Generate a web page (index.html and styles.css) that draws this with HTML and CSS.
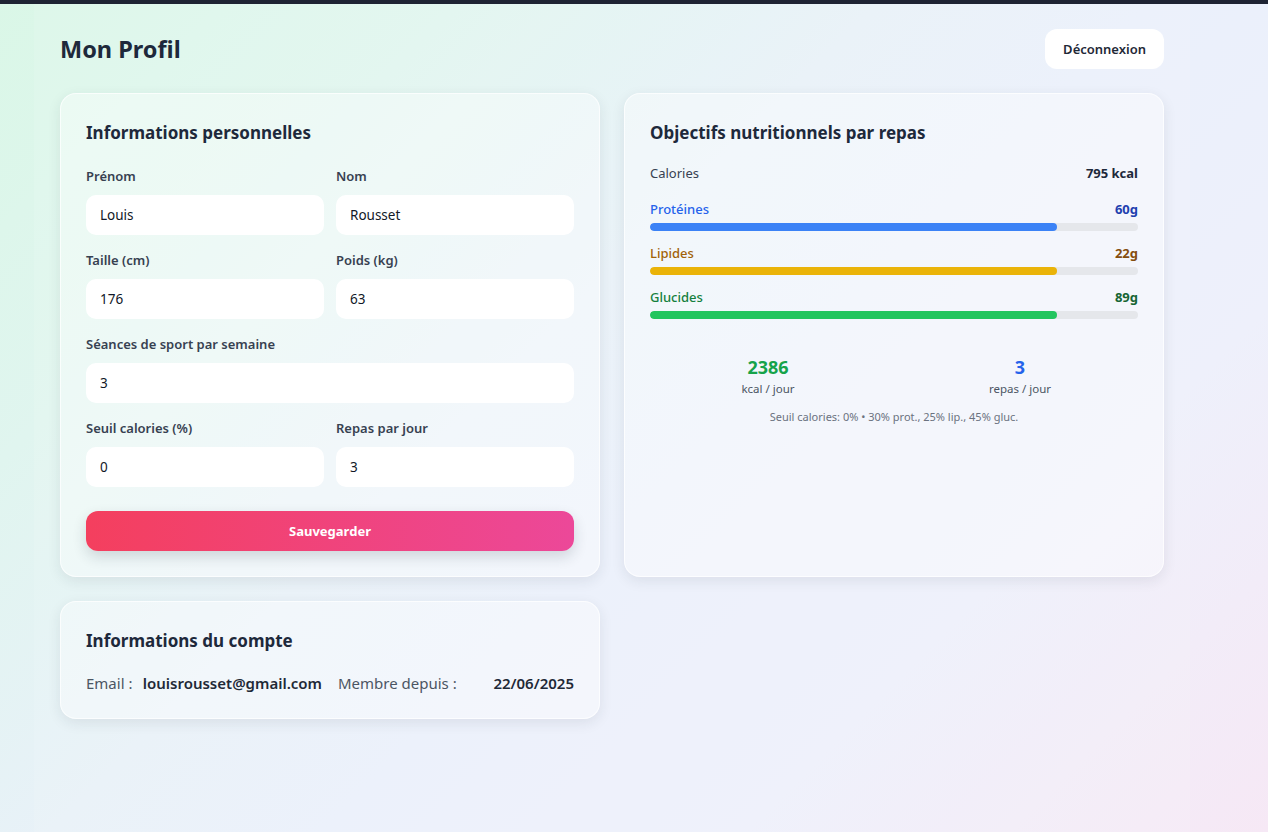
FILE: index.html
```html
<!DOCTYPE html>
<html lang="fr">
<head>
<meta charset="utf-8">
<title>Mon Profil</title>
<link rel="stylesheet" href="styles.css">
</head>
<body>
<div class="topbar"></div>
<div class="page">
  <header class="header">
    <h1 class="page-title">Mon Profil</h1>
    <button class="logout">Déconnexion</button>
  </header>
  <div class="grid">
    <section class="card">
      <h2 class="card-title">Informations personnelles</h2>
      <div class="form">
        <div class="row two">
          <div class="field"><label class="label">Prénom</label><div class="input">Louis</div></div>
          <div class="field"><label class="label">Nom</label><div class="input">Rousset</div></div>
        </div>
        <div class="row two">
          <div class="field"><label class="label">Taille (cm)</label><div class="input">176</div></div>
          <div class="field"><label class="label">Poids (kg)</label><div class="input">63</div></div>
        </div>
        <div class="row">
          <div class="field"><label class="label">Séances de sport par semaine</label><div class="input">3</div></div>
        </div>
        <div class="row two">
          <div class="field"><label class="label">Seuil calories (%)</label><div class="input">0</div></div>
          <div class="field"><label class="label">Repas par jour</label><div class="input">3</div></div>
        </div>
      </div>
      <button class="save">Sauvegarder</button>
    </section>
    <section class="card">
      <h2 class="card-title">Objectifs nutritionnels par repas</h2>
      <div class="nut-row cal">
        <span class="nut-label">Calories</span><span class="nut-val">795 kcal</span>
      </div>
      <div class="macro prot">
        <div class="nut-row"><span class="nut-label">Protéines</span><span class="nut-val">60g</span></div>
        <div class="track"><div class="fill" style="width:83.4%"></div></div>
      </div>
      <div class="macro lip">
        <div class="nut-row"><span class="nut-label">Lipides</span><span class="nut-val">22g</span></div>
        <div class="track"><div class="fill" style="width:83.4%"></div></div>
      </div>
      <div class="macro gluc">
        <div class="nut-row"><span class="nut-label">Glucides</span><span class="nut-val">89g</span></div>
        <div class="track"><div class="fill" style="width:83.4%"></div></div>
      </div>
      <div class="stats">
        <div class="stat"><div class="stat-num green">2386</div><div class="stat-lbl">kcal / jour</div></div>
        <div class="stat"><div class="stat-num blue">3</div><div class="stat-lbl">repas / jour</div></div>
      </div>
      <p class="note">Seuil calories: 0% • 30% prot., 25% lip., 45% gluc.</p>
    </section>
    <section class="card account">
      <h2 class="card-title">Informations du compte</h2>
      <div class="acc-grid">
        <div class="acc-item"><span class="acc-label">Email :</span><span class="acc-val">louisrousset@gmail.com</span></div>
        <div class="acc-item"><span class="acc-label">Membre depuis :</span><span class="acc-val">22/06/2025</span></div>
      </div>
    </section>
  </div>
</div>
</body>
</html>
```
FILE: styles.css
```css
* { box-sizing: border-box; }
html, body { margin: 0; padding: 0; }
body {
  min-height: 832px;
  font-family: "Noto Sans", "Open Sans", sans-serif;
  color: #1f2937;
  background: linear-gradient(135deg, #daf7e7 0%, #e0f5ef 22%, #e8f1f8 42%, #eaf0fb 55%, #eef0fb 75%, #f6e8f5 100%);
}
.topbar { height: 4px; background: #1e2333; }
.page {
  width: 1156px;
  margin-left: 34px;
  padding: 25px 26px 40px;
  min-height: 828px;
  background: rgba(255,255,255,0.1);
}
.header {
  display: flex;
  align-items: center;
  justify-content: space-between;
  height: 40px;
}
.page-title { margin: 0; font-size: 23.5px; font-weight: 700; color: #1e293b; }
.logout {
  height: 40px;
  padding: 0 18px;
  border: none;
  border-radius: 12px;
  background: #fff;
  font-family: inherit;
  font-size: 13px;
  font-weight: 600;
  color: #1f2937;
}
.grid {
  margin-top: 24px;
  display: grid;
  grid-template-columns: 1fr 1fr;
  gap: 24px;
  align-items: stretch;
}
.card {
  background: rgba(255,255,255,0.38);
  border: 1px solid rgba(255,255,255,0.7);
  border-radius: 16px;
  padding: 25px;
  box-shadow: 0 4px 14px rgba(30,41,59,0.09);
}
.card-title { margin: 0 0 20px; font-size: 17px; line-height: 28px; font-weight: 700; color: #1e293b; }
.form { display: flex; flex-direction: column; gap: 16px; }
.row { display: grid; grid-template-columns: 1fr; gap: 12px; }
.row.two { grid-template-columns: 1fr 1fr; }
.field { display: flex; flex-direction: column; }
.label { font-size: 13px; line-height: 18px; font-weight: 600; color: #374151; margin-bottom: 10px; }
.input {
  height: 40px;
  background: #fff;
  border-radius: 10px;
  padding: 0 14px;
  display: flex;
  align-items: center;
  font-size: 13.5px;
  color: #111827;
}
.save {
  margin-top: 24px;
  width: 100%;
  height: 40px;
  border: none;
  border-radius: 12px;
  background: linear-gradient(90deg, #f43f5e, #ec4899);
  color: #fff;
  font-family: inherit;
  font-size: 13px;
  font-weight: 700;
  box-shadow: 0 6px 14px rgba(30,41,59,0.16);
}
.nut-row {
  display: flex;
  justify-content: space-between;
  font-size: 13px;
  line-height: 18px;
}
.nut-row.cal { margin-top: -3px; margin-bottom: 18px; }
.cal .nut-label { color: #374151; }
.nut-val { font-weight: 700; }
.cal .nut-val { color: #1e293b; }
.macro { margin-bottom: 13px; }
.macro .nut-label { font-weight: 500; }
.track { margin-top: 5px; height: 8px; border-radius: 4px; background: #e5e7eb; overflow: hidden; }
.fill { height: 100%; border-radius: 4px; }
.prot .nut-label { color: #2563eb; }
.prot .nut-val { color: #1e40af; }
.prot .fill { background: #3b82f6; }
.lip .nut-label { color: #a16207; }
.lip .nut-val { color: #854d0e; }
.lip .fill { background: #eab308; }
.gluc .nut-label { color: #15803d; }
.gluc .nut-val { color: #166534; }
.gluc .fill { background: #22c55e; }
.stats {
  margin-top: 35px;
  display: grid;
  grid-template-columns: 1fr 1fr;
  gap: 16px;
  text-align: center;
}
.stat-num { font-size: 18px; line-height: 26px; font-weight: 700; }
.stat-num.green { color: #16a34a; }
.stat-num.blue { color: #2563eb; }
.stat-lbl { font-size: 11.5px; line-height: 18px; color: #4b5563; }
.note { margin: 11px 0 0; text-align: center; font-size: 11px; color: #6b7280; }
.account { padding-bottom: 24px; }
.acc-grid { display: grid; grid-template-columns: 1fr 1fr; gap: 16px; margin-top: -3px; }
.acc-item { display: flex; justify-content: space-between; align-items: baseline; font-size: 15px; line-height: 22px; }
.acc-label { color: #4b5563; }
.acc-val { font-weight: 600; color: #1f2937; }
```
